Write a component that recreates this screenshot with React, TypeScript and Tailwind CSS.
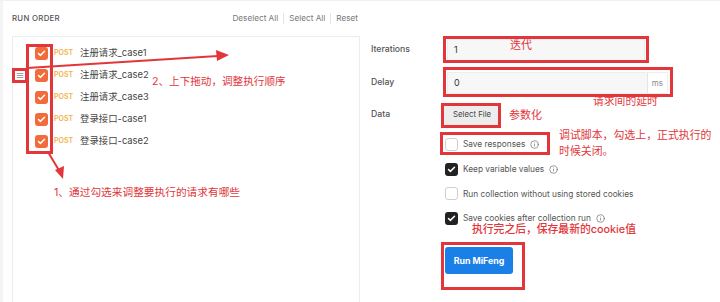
import { Check, Info } from "lucide-react";

const requests = ["注册请求_case1", "注册请求_case2", "注册请求_case3", "登录接口-case1", "登录接口-case2"];

const font = "font-['Inter','Noto_Sans_CJK_SC',sans-serif]";

function OrangeBox() {
  return (
    <div className="w-[13px] h-[13px] rounded-[3px] bg-[#f26b3a] flex items-center justify-center">
      <Check className="w-[9px] h-[9px] text-white" strokeWidth={4} />
    </div>
  );
}

function Option({ label, checked, info }: { label: string; checked: boolean; info?: boolean }) {
  return (
    <div className="flex items-center h-[24.7px]">
      {checked ? (
        <div className="w-[13px] h-[13px] rounded-[3px] bg-[#222] flex items-center justify-center">
          <Check className="w-[9px] h-[9px] text-white" strokeWidth={4} />
        </div>
      ) : (
        <div className="w-[13px] h-[13px] rounded-[3px] border border-[#cfcfcf] bg-white" />
      )}
      <span className="ml-[5px] text-[8.3px] text-[#555] whitespace-nowrap">{label}</span>
      {info && <Info className="ml-[5px] w-[9px] h-[9px] text-[#777]" strokeWidth={2} />}
    </div>
  );
}

export default function App() {
  const red = "#e2363b";
  const note = "absolute whitespace-nowrap text-[#e2363b]";
  return (
    <div className={`relative w-[720px] h-[302px] bg-white overflow-hidden ${font}`}>
      <div className="absolute left-0 top-0 w-[720px] h-px bg-[#f0f0f0]" />
      <div className="flex h-full">
        {/* run order */}
        <div className="w-[360px] flex flex-col border-l-[3px] border-[#f4f4f4]">
          <div className="flex items-center justify-between h-[36px] pl-[9px] pt-px">
            <span className="text-[7.8px] font-medium tracking-[0.3px] text-[#555]">RUN ORDER</span>
            <div className="flex items-center text-[8.2px] text-[#777] pr-[2px]">
              <span>Deselect All</span>
              <span className="w-px h-[11px] bg-[#e5e5e5] mx-[5px]" />
              <span>Select All</span>
              <span className="w-px h-[11px] bg-[#e5e5e5] mx-[5px]" />
              <span>Reset</span>
            </div>
          </div>
          <div className="ml-[9px] flex-1 border border-[#ececec] border-b-0 pt-[5px]">
            {requests.map((r) => (
              <div key={r} className="flex items-center h-[22px] pl-[22px]">
                <OrangeBox />
                <span className="ml-[6px] text-[7px] font-semibold text-[#f5b04a]">POST</span>
                <span className="ml-[7px] text-[9.4px] text-[#444]">{r}</span>
              </div>
            ))}
          </div>
        </div>

        {/* settings */}
        <div className="flex-1 pl-[11px] pt-[39px] text-[#555]">
          <div className="flex items-center h-[22px]">
            <span className="w-[76px] text-[8.7px] font-medium">Iterations</span>
            <div className="w-[198px] h-[22px] bg-[#f7f7f7] border border-[#eee] flex items-center pl-[6px] text-[9px] text-[#333]">1</div>
          </div>
          <div className="flex items-center h-[22px] mt-[11px]">
            <span className="w-[76px] text-[8.7px] font-medium">Delay</span>
            <div className="w-[221px] h-[22px] bg-[#f7f7f7] border border-[#eee] flex items-center text-[9px] text-[#333]">
              <span className="flex-1 pl-[6px]">0</span>
              <span className="border-l border-[#e5e5e5] h-full flex items-center px-[4px] text-[8px] text-[#888] bg-white">ms</span>
            </div>
          </div>
          <div className="flex items-center h-[20px] mt-[11px]">
            <span className="w-[73px] text-[8.7px] font-medium">Data</span>
            <div className="h-[19px] px-[9px] bg-[#ededed] rounded-[2px] flex items-center text-[7.8px] text-[#444]">Select File</div>
          </div>
          <div className="ml-[74px] mt-[7px]">
            <Option label="Save responses" checked={false} info />
            <Option label="Keep variable values" checked info />
            <Option label="Run collection without using stored cookies" checked={false} />
            <Option label="Save cookies after collection run" checked info />
            <div className="mt-[16px] w-[68px] h-[27px] rounded-[3px] bg-[#1b7fe8] flex items-center justify-center text-[8.8px] font-bold text-white">
              Run MiFeng
            </div>
          </div>
        </div>
      </div>

      {/* annotations */}
      <div className="absolute left-[26px] top-[44px] w-[27px] h-[110px] border-[3px] border-[#e2363b]" />
      <div className="absolute left-[12px] top-[68px] w-[16px] h-[15px] border-[3px] border-[#e2363b] bg-white flex items-center justify-center text-[9px] leading-none text-[#555]">≡</div>
      <div className="absolute left-[443px] top-[36px] w-[206px] h-[27px] border-[3px] border-[#e2363b]" />
      <div className="absolute left-[443px] top-[67px] w-[230px] h-[30px] border-[3px] border-[#e2363b]" />
      <div className="absolute left-[441px] top-[103px] w-[60px] h-[25px] border-[3px] border-[#e2363b]" />
      <div className="absolute left-[440px] top-[132px] w-[110px] h-[23px] border-[3px] border-[#e2363b]" />
      <div className="absolute left-[441px] top-[242px] w-[84px] h-[48px] border-[3px] border-[#e2363b]" />

      <svg className="absolute left-0 top-0" width="720" height="302">
        <line x1="27" y1="68" x2="218" y2="56" stroke={red} strokeWidth="2" />
        <polygon points="229,55 216,50 217,61" fill={red} />
        <line x1="48" y1="152" x2="60" y2="172" stroke={red} strokeWidth="2" />
        <polygon points="63,179 55,170 64,166" fill={red} />
      </svg>

      <span className={`${note} left-[152px] top-[75px] text-[10.6px] leading-[14px]`}>2、上下拖动，调整执行顺序</span>
      <span className={`${note} left-[54px] top-[186px] text-[10.7px] leading-[14px]`}>1、通过勾选来调整要执行的请求有哪些</span>
      <span className={`${note} left-[510px] top-[38px] text-[11px] leading-[14px]`}>迭代</span>
      <span className={`${note} left-[593px] top-[95px] text-[10.8px] leading-[14px]`}>请求间的延时</span>
      <span className={`${note} left-[509px] top-[108px] text-[11px] leading-[14px]`}>参数化</span>
      <span className={`${note} left-[559px] top-[127px] text-[10.9px] leading-[16px]`}>
        调试脚本，勾选上，正式执行的
        <br />
        时候关闭。
      </span>
      <span className={`${note} left-[472px] top-[223px] text-[10.8px] leading-[14px] font-medium`}>执行完之后，保存最新的cookie值</span>
    </div>
  );
}
